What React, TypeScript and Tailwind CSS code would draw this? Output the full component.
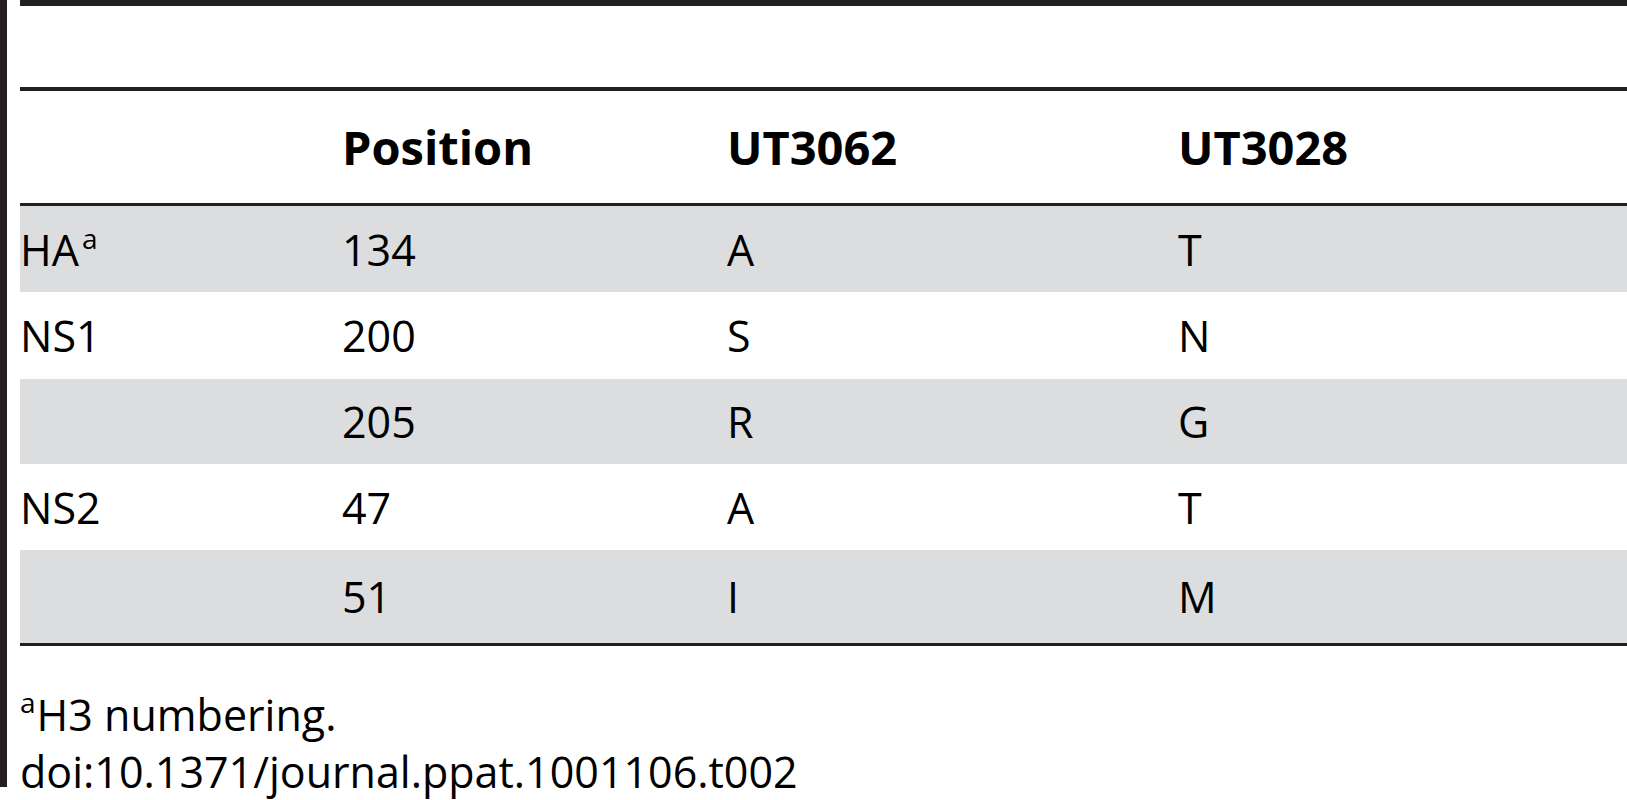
const rows = [
  { gene: "HA", sup: true, pos: "134", a: "A", b: "T", grey: true, h: "h-[86px]" },
  { gene: "NS1", sup: false, pos: "200", a: "S", b: "N", grey: false, h: "h-[87px]" },
  { gene: "", sup: false, pos: "205", a: "R", b: "G", grey: true, h: "h-[85px]" },
  { gene: "NS2", sup: false, pos: "47", a: "A", b: "T", grey: false, h: "h-[86px]" },
  { gene: "", sup: false, pos: "51", a: "I", b: "M", grey: true, h: "h-[93px]" },
];

const cols = "grid grid-cols-[322px_385px_451px_1fr] items-center";

export default function App() {
  return (
    <div className="flex h-[800px] w-full overflow-hidden bg-white text-black font-['Open_Sans',_'Liberation_Sans',_sans-serif]">
      {/* left rule */}
      <div className="h-[787px] w-[7px] shrink-0 bg-[#231f20]" />

      <div className="ml-[13px] flex min-w-0 flex-1 flex-col">
        <div className="h-[6px] bg-[#231f20]" />
        <div className="h-[82px]" />

        {/* header */}
        <div className={`${cols} h-[120px] border-y-[#231f20] border-t-4 border-b-[3px] text-[47px] font-bold`}>
          <div />
          <div>Position</div>
          <div>UT3062</div>
          <div>UT3028</div>
        </div>

        {/* body */}
        <div className="border-b-[3px] border-[#231f20] text-[43px]">
          {rows.map((r, i) => (
            <div
              key={i}
              className={`${cols} ${r.h} ${r.grey ? "bg-[#dcdddf]" : "bg-white"}`}
            >
              <div className="leading-none">
                {r.gene}
                {r.sup && (
                  <span className="relative -top-[17px] ml-[3px] text-[28px] leading-none">a</span>
                )}
              </div>
              <div className="leading-none">{r.pos}</div>
              <div className="leading-none">{r.a}</div>
              <div className="leading-none">{r.b}</div>
            </div>
          ))}
        </div>

        {/* footnotes */}
        <div className="mt-[40px] text-[43px] leading-[57px]">
          <div>
            <span className="relative -top-[18px] mr-[1px] text-[28px] leading-none">a</span>H3 numbering.
          </div>
          <div>doi:10.1371/journal.ppat.1001106.t002</div>
        </div>
      </div>
    </div>
  );
}
